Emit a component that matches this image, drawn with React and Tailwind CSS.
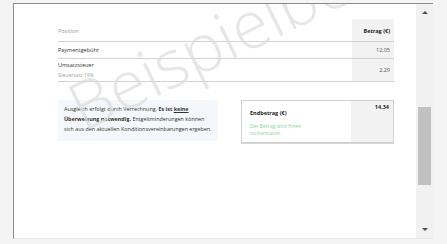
export default function App() {
  return (
    <div className="w-[447px] h-[244px] bg-[#f4f4f4] pt-[3px] pl-[13px]" style={{ fontFamily: "'Open Sans', 'Liberation Sans', sans-serif" }}>
      <div className="flex w-[420px] h-[236px] border-t border-l border-t-[#8c8c8c] border-l-[#8c8c8c] border-b border-b-[#e6e6e6]">
        {/* content */}
        <div className="relative flex-1 bg-white overflow-hidden pl-[44px] pr-[21px] pt-[15px]">
          {/* table */}
          <div className="relative z-10 w-[336px] text-[#333]">
            <div className="flex h-[23px] border-b border-[#d2d2d2]">
              <div className="flex-1 flex items-end pb-[6px] text-[5.5px] text-[#9a9a9a]">Position</div>
              <div className="w-[42px] bg-[#f2f2f2] flex items-end justify-end pb-[6px] pr-[4px] text-[5.5px] font-bold text-[#222]">Betrag (€)</div>
            </div>
            <div className="flex h-[17px] border-b border-[#d2d2d2]">
              <div className="flex-1 flex items-center text-[5.5px]">Paymentgebühr</div>
              <div className="w-[42px] bg-[#f2f2f2] flex items-center justify-end pr-[4px] text-[5.5px] text-[#555]">12,05</div>
            </div>
            <div className="flex h-[23px] border-b border-[#d2d2d2]">
              <div className="flex-1 flex flex-col justify-center leading-[10px]">
                <span className="text-[5.5px]">Umsatzsteuer</span>
                <span className="text-[5px] text-[#a0a0a0]">Steuersatz 19%</span>
              </div>
              <div className="w-[42px] bg-[#f2f2f2] flex items-center justify-end pr-[4px] text-[5.5px] text-[#555]">2,29</div>
            </div>
          </div>

          {/* summary */}
          <div className="relative z-10 flex items-start w-[336px] mt-[18px]">
            <div className="w-[160px] h-[41px] bg-[#f4f7fb] pl-[6px] pr-[4px] pt-[4px] text-[5.4px] leading-[10px] text-[#333] whitespace-nowrap">
              Ausgleich erfolgt durch Verrechnung. <b>Es ist <u>keine</u></b>
              <br />
              <b>Überweisung notwendig.</b> Entgeltminderungen können
              <br />
              sich aus den aktuellen Konditionsvereinbarungen ergeben.
            </div>
            <div className="ml-[23px] flex-1 flex h-[43px] border border-[#d0d0d0] shadow-[0_1px_0_#d6d6d6]">
              <div className="flex-1 pl-[8px] pt-[8px]">
                <div className="text-[5.5px] font-bold text-[#222] leading-[8px]">Endbetrag (€)</div>
                <div className="mt-[6px] text-[5px] leading-[6.5px] text-[#7fd69b] w-[56px]">Der Betrag wird Ihnen rückerstattet.</div>
              </div>
              <div className="w-[42px] bg-[#f2f2f2] pr-[4px] pt-[2px] text-right text-[5.5px] font-bold text-[#222]">14,34</div>
            </div>
          </div>

          {/* watermark */}
          <div className="absolute left-[58px] top-[72px] z-20 origin-left -rotate-[26deg] text-[66px] font-light text-[#dcdcdc]/70 whitespace-nowrap pointer-events-none leading-none">
            Beispielbeleg
          </div>
        </div>

        {/* scrollbar */}
        <div className="w-[17px] bg-[#f1f1f1] flex flex-col items-center">
          <div className="h-[17px] flex items-center justify-center">
            <div className="w-0 h-0 border-l-[3px] border-r-[3px] border-b-[3px] border-l-transparent border-r-transparent border-b-[#505050]" />
          </div>
          <div className="flex-1 w-full px-[2px] pt-[86px]">
            <div className="h-[78px] bg-[#c1c1c1]" />
          </div>
          <div className="h-[17px] flex items-center justify-center">
            <div className="w-0 h-0 border-l-[3px] border-r-[3px] border-t-[3px] border-l-transparent border-r-transparent border-t-[#505050]" />
          </div>
        </div>
      </div>
    </div>
  );
}
